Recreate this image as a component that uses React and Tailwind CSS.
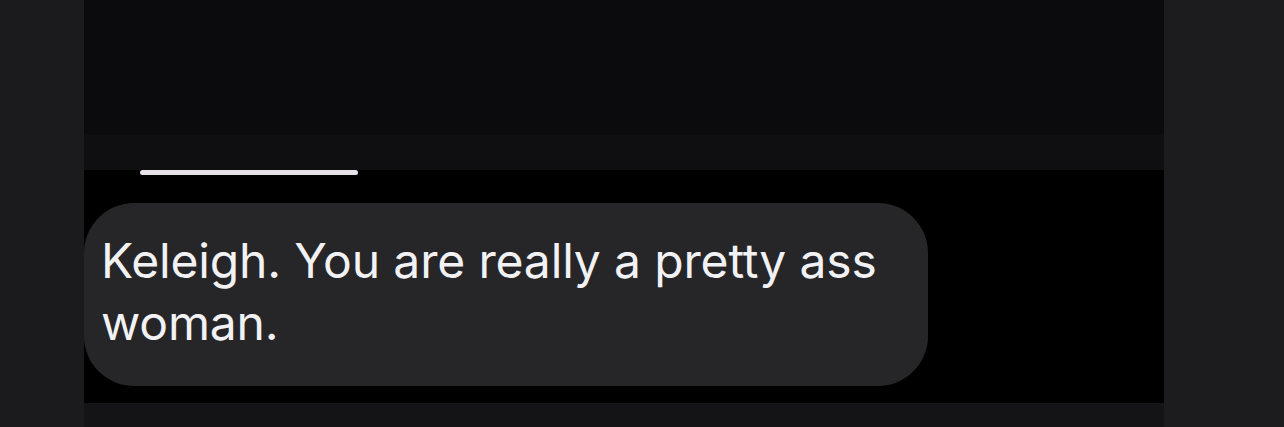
import React from 'react';

const MessageBubble = ({ text }) => (
    <div className="w-[844px] rounded-[50px] bg-[#262628] pl-[17px] pr-[17px] pt-[27px] pb-[32px]">
        <p className="text-[48px] leading-[62px] tracking-[-0.15px] text-[#f2f2f4] font-['Inter','Liberation_Sans',sans-serif]">
            {text}
        </p>
    </div>
);

const App = () => {
    return (
        <div className="w-[1284px] h-[427px] flex bg-black overflow-hidden">
            {/* Left dimmed edge */}
            <div className="w-[84px] shrink-0 bg-[#1b1b1d]" />

            {/* Conversation column */}
            <div className="flex-1 flex flex-col">
                <div className="h-[135px] bg-[#0b0b0d]" />
                <div className="h-[35px] bg-[#0f0f11]" />

                <div className="h-[233px] bg-black flex flex-col">
                    {/* Bottom edge of the previous media bubble */}
                    <div className="ml-[56px] w-[218px] h-[5px] rounded-full bg-[#e6e2e8]" />
                    <div className="mt-[28px]">
                        <MessageBubble text="Keleigh. You are really a pretty ass woman." />
                    </div>
                </div>

                <div className="flex-1 bg-[#141416]" />
            </div>

            {/* Right dimmed edge */}
            <div className="w-[120px] shrink-0 bg-[#1c1c1e]" />
        </div>
    );
};

export default App;
